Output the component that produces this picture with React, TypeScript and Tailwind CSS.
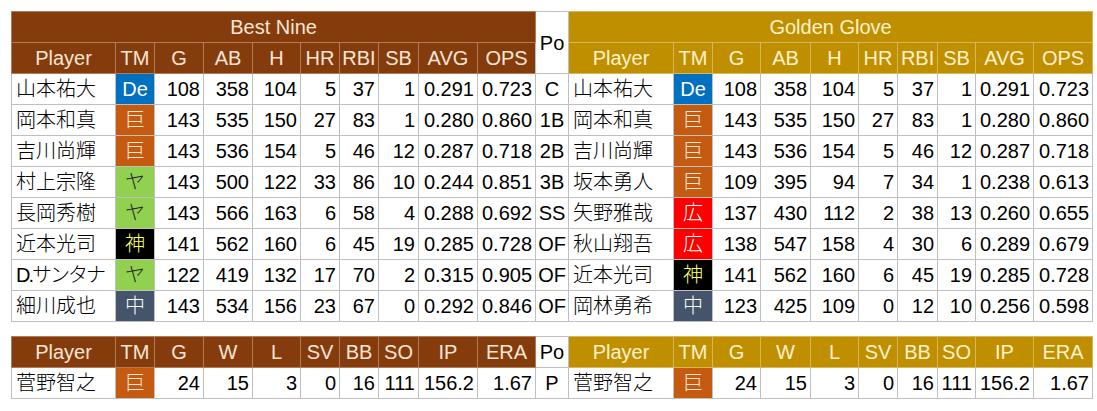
import type { ReactNode } from 'react';

// Team badge colours, keyed by the short team mark
const TEAM: Record<string, string> = {
  De: 'bg-[#0070c0] text-white',
  '巨': 'bg-[#c55a11] text-[#fbe5d6]',
  'ヤ': 'bg-[#92d050] text-[#262626]',
  '神': 'bg-black text-[#ffff66]',
  '中': 'bg-[#44546a] text-white',
  '広': 'bg-[#ff0000] text-white',
};

type Row = (string | number)[];

const batters: { po: string; best: Row; glove: Row }[] = [
  { po: 'C', best: ['山本祐大', 'De', 108, 358, 104, 5, 37, 1, '0.291', '0.723'], glove: ['山本祐大', 'De', 108, 358, 104, 5, 37, 1, '0.291', '0.723'] },
  { po: '1B', best: ['岡本和真', '巨', 143, 535, 150, 27, 83, 1, '0.280', '0.860'], glove: ['岡本和真', '巨', 143, 535, 150, 27, 83, 1, '0.280', '0.860'] },
  { po: '2B', best: ['吉川尚輝', '巨', 143, 536, 154, 5, 46, 12, '0.287', '0.718'], glove: ['吉川尚輝', '巨', 143, 536, 154, 5, 46, 12, '0.287', '0.718'] },
  { po: '3B', best: ['村上宗隆', 'ヤ', 143, 500, 122, 33, 86, 10, '0.244', '0.851'], glove: ['坂本勇人', '巨', 109, 395, 94, 7, 34, 1, '0.238', '0.613'] },
  { po: 'SS', best: ['長岡秀樹', 'ヤ', 143, 566, 163, 6, 58, 4, '0.288', '0.692'], glove: ['矢野雅哉', '広', 137, 430, 112, 2, 38, 13, '0.260', '0.655'] },
  { po: 'OF', best: ['近本光司', '神', 141, 562, 160, 6, 45, 19, '0.285', '0.728'], glove: ['秋山翔吾', '広', 138, 547, 158, 4, 30, 6, '0.289', '0.679'] },
  { po: 'OF', best: ['D.サンタナ', 'ヤ', 122, 419, 132, 17, 70, 2, '0.315', '0.905'], glove: ['近本光司', '神', 141, 562, 160, 6, 45, 19, '0.285', '0.728'] },
  { po: 'OF', best: ['細川成也', '中', 143, 534, 156, 23, 67, 0, '0.292', '0.846'], glove: ['岡林勇希', '中', 123, 425, 109, 0, 12, 10, '0.256', '0.598'] },
];

const pitcher: Row = ['菅野智之', '巨', 24, 15, 3, 0, 16, 111, '156.2', '1.67'];

const BAT_HEAD = ['Player', 'TM', 'G', 'AB', 'H', 'HR', 'RBI', 'SB', 'AVG', 'OPS'];
const PIT_HEAD = ['Player', 'TM', 'G', 'W', 'L', 'SV', 'BB', 'SO', 'IP', 'ERA'];

const BROWN = 'bg-[#843c0c] text-[#fbe5d6] border border-[#b27a55]';
const GOLD = 'bg-[#bf8f00] text-[#fff2cc] border border-[#d6b85c]';
const CELL = 'border border-[#bfbfbf] p-0';

function Cols() {
  return (
    <colgroup>
      <col className="w-[104px]" />
      <col className="w-[39px]" />
      <col className="w-[49px]" />
      <col className="w-[49px]" />
      <col className="w-[48px]" />
      <col className="w-[39px]" />
      <col className="w-[39px]" />
      <col className="w-[40px]" />
      <col className="w-[59px]" />
      <col className="w-[58px]" />
      <col className="w-[33px]" />
      <col className="w-[105px]" />
      <col className="w-[39px]" />
      <col className="w-[48px]" />
      <col className="w-[50px]" />
      <col className="w-[48px]" />
      <col className="w-[39px]" />
      <col className="w-[40px]" />
      <col className="w-[38px]" />
      <col className="w-[58px]" />
      <col className="w-[59px]" />
    </colgroup>
  );
}

function Heads({ names, tone }: { names: string[]; tone: string }) {
  return (
    <>
      {names.map((n, i) => (
        <th key={i} className={`${tone} p-0 font-normal text-center`}>
          {n}
        </th>
      ))}
    </>
  );
}

function Cells({ row }: { row: Row }) {
  const [name, team, ...nums] = row;
  const long = String(name).length > 4;
  return (
    <>
      <td className={`${CELL} pl-1 text-left whitespace-nowrap overflow-hidden font-light ${long ? 'tracking-[-2px]' : ''}`}>
        {name}
      </td>
      <td className={`${CELL} text-center font-light ${TEAM[String(team)]}`}>{team}</td>
      {nums.map((v, i) => (
        <td key={i} className={`${CELL} pr-[3px] text-right`}>
          {v}
        </td>
      ))}
    </>
  );
}

function Po({ children }: { children: ReactNode }) {
  return <td className={`${CELL} text-center`}>{children}</td>;
}

export default function App() {
  const font = { fontFamily: '"Liberation Sans", Arial, "Noto Sans CJK JP", sans-serif' };
  return (
    <div className="min-h-screen bg-white pt-[11px] pl-[11px] text-[20px] text-black" style={font}>
      <table className="table-fixed border-collapse w-[1082px]">
        <Cols />
        <thead>
          <tr className="h-[31px]">
            <th colSpan={10} className={`${BROWN} p-0 font-normal text-center`}>
              Best Nine
            </th>
            <th rowSpan={2} className={`${CELL} font-normal text-center bg-white`}>
              Po
            </th>
            <th colSpan={10} className={`${GOLD} p-0 font-normal text-center`}>
              Golden Glove
            </th>
          </tr>
          <tr className="h-[31px]">
            <Heads names={BAT_HEAD} tone={BROWN} />
            <Heads names={BAT_HEAD} tone={GOLD} />
          </tr>
        </thead>
        <tbody>
          {batters.map((b, i) => (
            <tr key={i} className="h-[31px]">
              <Cells row={b.best} />
              <Po>{b.po}</Po>
              <Cells row={b.glove} />
            </tr>
          ))}
        </tbody>
      </table>

      <table className="table-fixed border-collapse w-[1082px] mt-[14px]">
        <Cols />
        <thead>
          <tr className="h-[31px]">
            <Heads names={PIT_HEAD} tone={BROWN} />
            <th className={`${CELL} font-normal text-center bg-white`}>Po</th>
            <Heads names={PIT_HEAD} tone={GOLD} />
          </tr>
        </thead>
        <tbody>
          <tr className="h-[30px]">
            <Cells row={pitcher} />
            <Po>P</Po>
            <Cells row={pitcher} />
          </tr>
        </tbody>
      </table>
    </div>
  );
}
